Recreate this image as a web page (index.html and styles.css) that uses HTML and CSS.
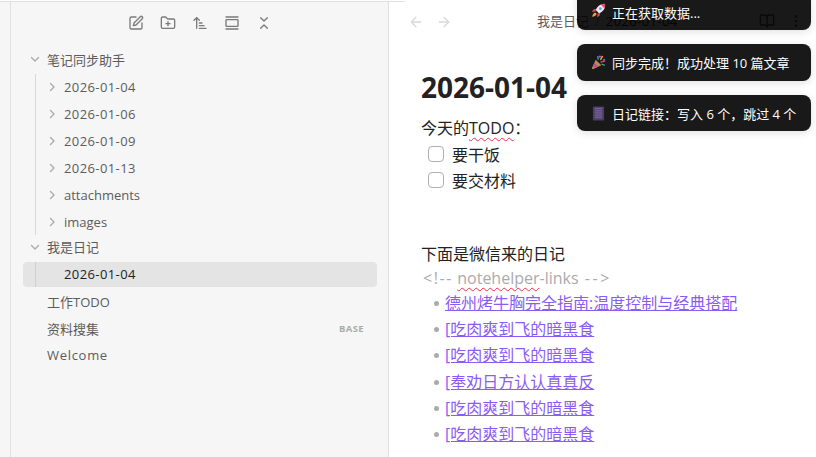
FILE: index.html
```html
<!DOCTYPE html>
<html lang="zh">
<head>
<meta charset="utf-8">
<title>2026-01-04</title>
<link rel="stylesheet" href="styles.css">
</head>
<body>
<div class="app">
  <div class="rail"></div>
  <aside class="sidebar">
    <div class="tools">
      <svg class="tool" viewBox="0 0 24 24"><path d="M12 3H5a2 2 0 0 0-2 2v14a2 2 0 0 0 2 2h14a2 2 0 0 0 2-2v-7"/><path d="M18.4 2.600a2.100 2.100 0 1 1 3 3L12 15l-4 1 1-4Z"/></svg>
      <svg class="tool" viewBox="0 0 24 24"><path d="M12 10v6"/><path d="M9 13h6"/><path d="M20 20a2 2 0 0 0 2-2V8a2 2 0 0 0-2-2h-7.900a2 2 0 0 1-1.700-.9l-.8-1.200A2 2 0 0 0 7.900 3H4a2 2 0 0 0-2 2v13a2 2 0 0 0 2 2Z"/></svg>
      <svg class="tool" viewBox="0 0 24 24"><path d="m3 8 4-4 4 4"/><path d="M7 4v16"/><path d="M11 12h4"/><path d="M11 16h7"/><path d="M11 20h10"/></svg>
      <svg class="tool" viewBox="0 0 24 24"><path d="M3 3h18"/><path d="M3 21h18"/><rect x="3" y="7" width="18" height="10" rx="1"/></svg>
      <svg class="tool" viewBox="0 0 24 24"><path d="m7 20 5-5 5 5"/><path d="m7 4 5 5 5-5"/></svg>
    </div>
    <nav class="tree">
      <div class="row folder"><svg class="chev" viewBox="0 0 24 24"><path d="m5 9 7 7 7-7"/></svg><span>笔记同步助手</span></div>
      <div class="group">
        <div class="row child"><svg class="chev side" viewBox="0 0 24 24"><path d="m9 5 7 7-7 7"/></svg><span class="date">2026-01-04</span></div>
        <div class="row child"><svg class="chev side" viewBox="0 0 24 24"><path d="m9 5 7 7-7 7"/></svg><span class="date">2026-01-06</span></div>
        <div class="row child"><svg class="chev side" viewBox="0 0 24 24"><path d="m9 5 7 7-7 7"/></svg><span class="date">2026-01-09</span></div>
        <div class="row child"><svg class="chev side" viewBox="0 0 24 24"><path d="m9 5 7 7-7 7"/></svg><span class="date">2026-01-13</span></div>
        <div class="row child"><svg class="chev side" viewBox="0 0 24 24"><path d="m9 5 7 7-7 7"/></svg><span>attachments</span></div>
        <div class="row child"><svg class="chev side" viewBox="0 0 24 24"><path d="m9 5 7 7-7 7"/></svg><span>images</span></div>
      </div>
      <div class="row folder"><svg class="chev" viewBox="0 0 24 24"><path d="m5 9 7 7 7-7"/></svg><span>我是日记</span></div>
      <div class="row active"><span class="guide"></span><span class="date">2026-01-04</span></div>
      <div class="row file"><span>工作TODO</span></div>
      <div class="row file"><span>资料搜集</span><span class="tag">BASE</span></div>
      <div class="row file"><span class="word">Welcome</span></div>
    </nav>
  </aside>
  <main class="main">
    <header class="topbar">
      <div class="nav">
        <svg class="arrow" viewBox="0 0 24 24"><path d="M19 12H5"/><path d="m12 19-7-7 7-7"/></svg>
        <svg class="arrow" viewBox="0 0 24 24"><path d="M5 12h14"/><path d="m12 5 7 7-7 7"/></svg>
      </div>
      <div class="crumb"><span class="parent">我是日记</span><span class="sep">/</span><span class="cur">2026-01-04</span></div>
      <div class="actions">
        <svg class="act" viewBox="0 0 24 24"><path d="M12 7v14"/><path d="M3 18a1 1 0 0 1-1-1V4a1 1 0 0 1 1-1h5a4 4 0 0 1 4 4 4 4 0 0 1 4-4h5a1 1 0 0 1 1 1v13a1 1 0 0 1-1 1h-6a3 3 0 0 0-3 3 3 3 0 0 0-3-3Z"/></svg>
        <svg class="act dots" viewBox="0 0 24 24"><circle cx="12" cy="5" r="1"/><circle cx="12" cy="12" r="1"/><circle cx="12" cy="19" r="1"/></svg>
      </div>
    </header>
    <article class="doc">
      <h1>2026-01-04</h1>
      <p>今天的<span class="spell">TODO</span>：</p>
      <div class="task"><span class="box"></span><span>要干饭</span></div>
      <div class="task"><span class="box"></span><span>要交材料</span></div>
      <p class="gap">下面是微信来的日记</p>
      <p class="comment"><span class="mark">&lt;!--</span> <span class="spell">notehelper</span>-links <span class="mark end">--&gt;</span></p>
      <ul class="links">
        <li><a>德州烤牛胸完全指南:温度控制与经典搭配</a></li>
        <li><a>[吃肉爽到飞的暗黑食</a></li>
        <li><a>[吃肉爽到飞的暗黑食</a></li>
        <li><a>[奉劝日方认认真真反</a></li>
        <li><a>[吃肉爽到飞的暗黑食</a></li>
        <li><a>[吃肉爽到飞的暗黑食</a></li>
      </ul>
    </article>
  </main>
</div>
<div class="toasts">
  <div class="toast first">
    <svg class="emoji" viewBox="0 0 16 16"><path fill="#f0a030" d="M4.500 10c-1.800.5-2.900 2-3.200 4.700 2.700-.3 4.200-1.400 4.700-3.200Z"/><path fill="#dd3f62" d="M5.600 6.200 2.400 6.900.9 9.400l3.700-.2ZM9.800 10.400l-.7 3.200-2.500 1.500.2-3.700Z"/><path fill="#f3e6ee" d="M15 1c-4.600-.4-8.200 1.900-10 6.500L8.500 11C13.100 9.200 15.400 5.600 15 1Z"/><path fill="#e8506e" d="M15 1c-1.800-.2-3.400 0-4.800.6l4.200 4.200C15 4.400 15.200 2.800 15 1Z"/><circle cx="10" cy="6" r="1.500" fill="#5aa7e0"/></svg>
    <span>正在获取数据...</span>
  </div>
  <div class="toast">
    <svg class="emoji" viewBox="0 0 16 16"><path fill="#b98a4e" d="M5 5 11 11 2.500 15c-.9.400-1.800-.5-1.400-1.400Z"/><path fill="#8a5ab8" d="M3.600 8.400 7.600 12.400 5.300 13.500 2.500 10.700Z"/><path fill="#e0477e" d="M3.300 9.500 6.500 12.700 4.400 13.700 2.300 11.600Z"/><circle cx="9.500" cy="1.800" r="1.200" fill="#e0477e"/><circle cx="14" cy="5" r="1.100" fill="#3f8fd8"/><path fill="#3f8fd8" d="M6.500 1h1.500l.4 4H6.900Z"/><path fill="#e8b23a" d="M11.500.8l1.600.6-2.400 4.300-1.200-.6Z"/><path fill="#e0477e" d="M10 7l5-1.400.4 1.300-5 1.400Z"/><path fill="#35b28a" d="M11.500 9l3.500 1.500-.6 1.200-3.500-1.500Z"/></svg>
    <span>同步完成！成功处理 10 篇文章</span>
  </div>
  <div class="toast last">
    <svg class="emoji" viewBox="0 0 16 16"><rect x="2" y="0.500" width="12" height="15" rx="1" fill="#4d3c68"/><path stroke="#7f6ca4" stroke-width="1" d="M4 2.500h8M4 4.500h8M4 6.500h8M4 8.500h8M4 10.500h8M4 12.500h8"/></svg>
    <span>日记链接：写入 6 个，跳过 4 个</span>
  </div>
</div>
</body>
</html>
```
FILE: styles.css
```css
* { box-sizing: border-box; }
html, body { margin: 0; height: 100%; overflow: hidden; background: #fff; }
body {
  font-family: "Open Sans", "Noto Sans CJK SC", sans-serif;
  color: #222;
  position: relative;
}
.app { display: flex; height: 457px; padding-top: 1px; }
.rail {
  width: 11px;
  background: #f6f6f6;
  border-right: 1px solid #e0e0e0;
  border-top: 1px solid #e0e0e0;
}
.sidebar {
  width: 378px;
  background: #f6f6f6;
  border-right: 1px solid #e0e0e0;
  border-top: 1px solid #e0e0e0;
  display: flex;
  flex-direction: column;
}
.tools {
  display: flex;
  justify-content: center;
  gap: 16px;
  height: 26px;
  margin-top: 13px;
  align-items: flex-start;
}
.tool {
  width: 16px;
  height: 16px;
  fill: none;
  stroke: #7a7a7a;
  stroke-width: 2;
  stroke-linecap: round;
  stroke-linejoin: round;
}
.tree { padding: 5px 11px 0 12px; display: flex; flex-direction: column; }
.row {
  height: 26.860px;
  display: flex;
  align-items: center;
  font-size: 13px;
  color: #5c5c5c;
  flex: none;
}
.folder { padding-left: 6px; }
.date { letter-spacing: .4px; }
.word { letter-spacing: .7px; }
.chev {
  width: 12px;
  height: 12px;
  fill: none;
  stroke: #ababab;
  stroke-width: 2.800;
  stroke-linecap: round;
  stroke-linejoin: round;
  margin-right: 6px;
  flex: none;
}
.group { border-left: 1px solid #d8d8d8; margin: 1px 0 -1.500px 12px; }
.child { padding-left: 10px; }
.active {
  background: #e4e4e4;
  border-radius: 4px;
  color: #222;
  position: relative;
  padding-left: 41px;
  height: 25px;
  margin-top: 1.500px;
  margin-bottom: 1px;
}
.guide {
  position: absolute;
  left: 12px;
  top: 0;
  bottom: 0;
  width: 1px;
  background: #cfcfcf;
}
.file { padding-left: 24px; padding-right: 13px; }
.tag {
  margin-left: auto;
  font-size: 9.500px;
  font-weight: 700;
  letter-spacing: .4px;
  color: #ababab;
}
.main { flex: 1; min-width: 0; background: #fff; position: relative; }
.main::before {
  content: "";
  position: absolute;
  left: 0;
  top: 0;
  width: 16px;
  height: 1px;
  background: #e0e0e0;
}
.topbar { height: 39px; display: flex; align-items: center; }
.nav { display: flex; gap: 12px; padding-left: 19px; padding-top: 2px; }
.arrow {
  width: 16px;
  height: 16px;
  fill: none;
  stroke: #d8d8d8;
  stroke-width: 2;
  stroke-linecap: round;
  stroke-linejoin: round;
}
.crumb { font-size: 13px; color: #5c5c5c; margin-left: 85px; white-space: nowrap; }
.sep { margin: 0 6px; color: #999; }
.cur { color: #222; letter-spacing: .4px; }
.actions { margin-left: auto; display: flex; gap: 13px; padding-right: 12px; align-items: center; }
.act {
  width: 16px;
  height: 16px;
  fill: none;
  stroke: #5c5c5c;
  stroke-width: 2;
  stroke-linecap: round;
  stroke-linejoin: round;
}
.doc { padding: 28px 0 0 32px; }
h1 {
  margin: 0 0 9px;
  font-size: 28px;
  line-height: 38px;
  font-weight: 700;
  color: #222;
}
p { margin: 0; font-size: 16px; line-height: 26px; color: #222; }
.spell {
  text-decoration: underline wavy #e93147 1px;
  text-underline-offset: 3px;
  text-decoration-skip-ink: none;
}
.task {
  display: flex;
  align-items: center;
  height: 26px;
  font-size: 16px;
  padding-left: 7px;
  gap: 8px;
  color: #222;
}
.box {
  width: 16px;
  height: 16px;
  border: 1px solid #b0b0b0;
  border-radius: 4px;
  background: #fff;
  flex: none;
}
.gap { margin-top: 48px; }
.comment { color: #ababab; line-height: 24px; margin-top: -1px; padding-left: 2px; }
.mark { letter-spacing: 1.600px; }
.end { letter-spacing: 2.600px; margin-left: 2px; }
.links { list-style: none; margin: 0; padding: 0 0 0 24px; }
.links li { height: 26.200px; line-height: 26.200px; font-size: 16px; position: relative; }
.links li::before {
  content: "";
  position: absolute;
  left: -11px;
  top: 11px;
  width: 5px;
  height: 5px;
  border-radius: 50%;
  background: #ababab;
}
.links a { color: #8a5cf5; text-decoration: underline; }
.toasts {
  position: absolute;
  left: 577px;
  top: -8px;
  width: 234px;
  display: flex;
  flex-direction: column;
  gap: 14px;
}
.toast {
  background: rgba(0,0,0,.9);
  border-radius: 8px;
  height: 37px;
  display: flex;
  align-items: center;
  padding-left: 14px;
  gap: 6px;
  color: #fff;
  font-size: 13px;
  white-space: nowrap;
  box-shadow: 0 2px 8px rgba(0,0,0,.12);
}
.toast.first { height: 38px; align-items: flex-start; padding-top: 11px; }
.toast.last { height: 36px; }
.emoji { width: 15px; height: 15px; flex: none; }
```
